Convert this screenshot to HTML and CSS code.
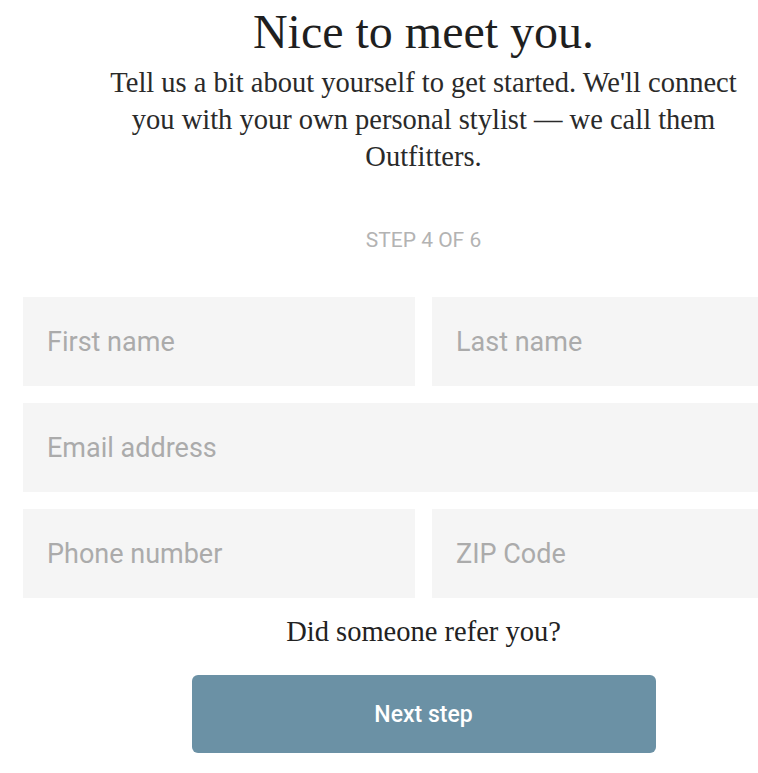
FILE: index.html
```html
<!DOCTYPE html>
<html lang="en">
<head>
<meta charset="utf-8">
<title>Nice to meet you</title>
<link rel="stylesheet" href="styles.css">
</head>
<body>
<div class="viewport">
<main class="page">
  <h1 class="title">Nice to meet you.</h1>
  <p class="intro">Tell us a bit about yourself to get started. We'll connect you with your own personal stylist — we call them Outfitters.</p>
  <div class="step">STEP 4 OF 6</div>
  <form class="fields">
    <input class="field" type="text" placeholder="First name">
    <input class="field" type="text" placeholder="Last name">
    <input class="field field-wide" type="email" placeholder="Email address">
    <input class="field" type="tel" placeholder="Phone number">
    <input class="field" type="text" placeholder="ZIP Code">
  </form>
  <p class="refer">Did someone refer you?</p>
  <button class="next" type="button">Next step</button>
</main>
</div>
</body>
</html>
```

FILE: styles.css
```css
html, body {
  margin: 0;
  padding: 0;
  overflow: hidden;
  background: #ffffff;
}

body {
  font-family: "Liberation Serif", "Times New Roman", serif;
  color: #222222;
}

.viewport {
  width: 758px;
  height: 773px;
  overflow: hidden;
}

.page {
  width: 801px;
  margin-left: 23px;
  display: flex;
  flex-direction: column;
  align-items: center;
}

.title {
  margin: 0;
  padding-top: 8px;
  font-size: 48px;
  line-height: 48px;
  font-weight: normal;
  color: #1f1f1f;
}

.intro {
  margin: 8px 0 0;
  width: 650px;
  text-align: center;
  font-size: 28.5px;
  line-height: 37px;
  color: #2a2a2a;
}

.step {
  margin-top: 53px;
  font-family: Roboto, "Liberation Sans", sans-serif;
  font-size: 21px;
  line-height: 24px;
  color: #b3b3b3;
}

.fields {
  margin-top: 45px;
  width: 100%;
  display: grid;
  grid-template-columns: 1fr 1fr;
  gap: 17px;
}

.field {
  box-sizing: border-box;
  width: 100%;
  height: 89px;
  margin: 0;
  border: none;
  outline: none;
  padding: 0 24px;
  background: #f5f5f5;
  font-family: Roboto, "Liberation Sans", sans-serif;
  font-size: 27px;
  color: #333333;
}

.field::placeholder {
  color: #ababab;
  opacity: 1;
}

.field-wide {
  grid-column: 1 / -1;
}

.refer {
  margin: 15px 0 0;
  font-size: 28.5px;
  line-height: 37px;
  color: #222222;
}

.next {
  margin-top: 25px;
  width: 464px;
  height: 78px;
  border: none;
  border-radius: 6px;
  background: #6b91a5;
  color: #ffffff;
  font-family: Roboto, "Liberation Sans", sans-serif;
  font-weight: 500;
  font-size: 23px;
  cursor: pointer;
}
```
